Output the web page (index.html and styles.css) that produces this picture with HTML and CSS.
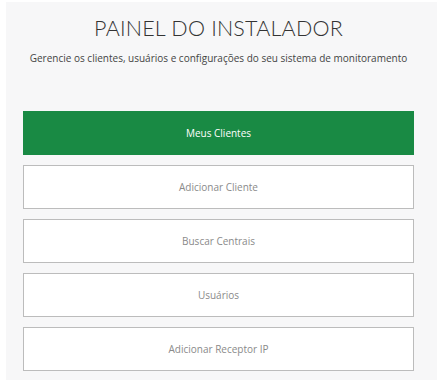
FILE: index.html
```html
<!DOCTYPE html>
<html lang="pt-BR">
<head>
    <meta charset="UTF-8">
    <meta name="viewport" content="width=device-width, initial-scale=1.0">
    <title>Painel do Instalador</title>
    <link rel="stylesheet" href="styles.css">
</head>
<body>
    <div class="panel">
        <h1 class="title">PAINEL DO INSTALADOR</h1>
        <p class="subtitle">Gerencie os clientes, usuários e configurações do seu sistema de monitoramento</p>

        <div class="menu">
            <button class="menu-btn active">Meus Clientes</button>
            <button class="menu-btn">Adicionar Cliente</button>
            <button class="menu-btn">Buscar Centrais</button>
            <button class="menu-btn">Usuários</button>
            <button class="menu-btn">Adicionar Receptor IP</button>
        </div>
    </div>
</body>
</html>
```

FILE: styles.css
```css
:root {
    --panel: #f7f7f8;
    --green: #198a44;
    --border: #bcbcbc;
    --text: #333;
    --muted: #8a8a8a;
}

body {
    margin: 0;
    background-color: #fff;
    font-family: 'Open Sans', 'Noto Sans', sans-serif;
}

.panel {
    margin: 2px 0 0 6px;
    padding: 13px 23px 9px 17px;
    background-color: var(--panel);
}

.title {
    margin: 0;
    font-family: Lato, sans-serif;
    font-size: 21.5px;
    font-weight: 300;
    line-height: 26px;
    text-align: center;
    color: var(--text);
    letter-spacing: 0.2px;
}

.subtitle {
    margin: 10px 0 0;
    font-size: 10px;
    line-height: 14px;
    text-align: center;
    color: #444;
}

.menu {
    display: flex;
    flex-direction: column;
    gap: 10px;
    margin-top: 46px;
}

.menu-btn {
    height: 44px;
    background-color: #fff;
    border: 1px solid var(--border);
    font-family: inherit;
    font-size: 10px;
    color: var(--muted);
    cursor: pointer;
}

.menu-btn.active {
    background-color: var(--green);
    border-color: var(--green);
    color: #fff;
}
```
